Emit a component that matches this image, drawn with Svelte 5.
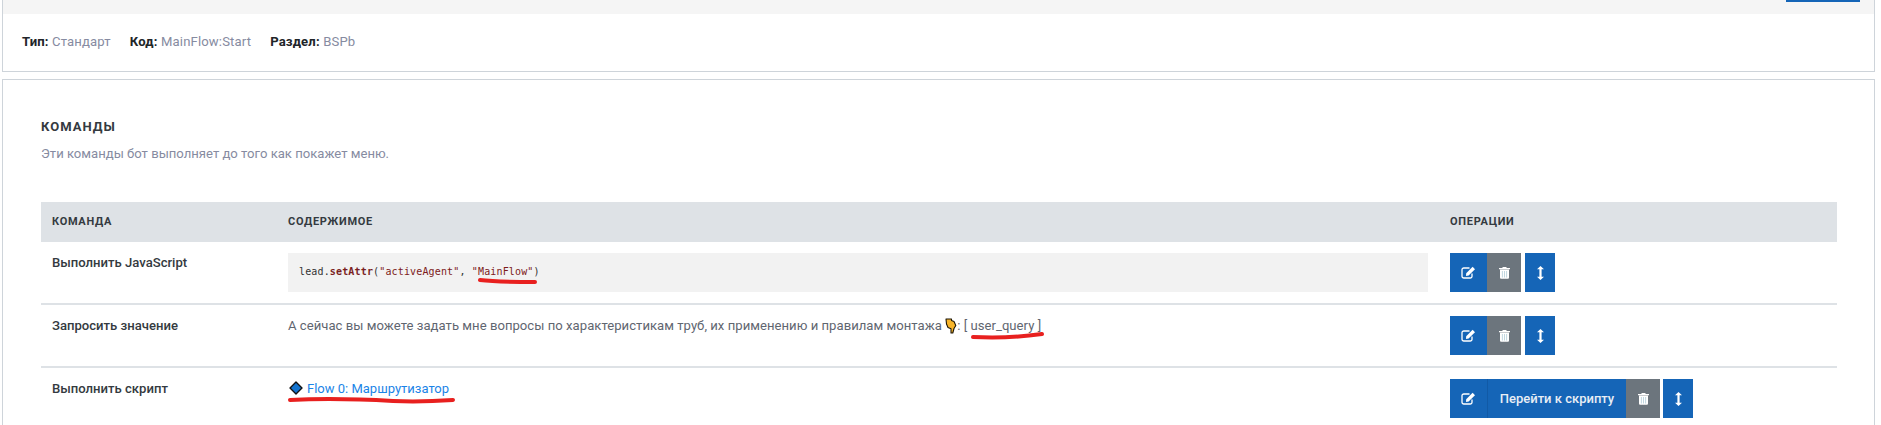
<script>
  const rows = [
    { name: 'Выполнить JavaScript', kind: 'code' },
    { name: 'Запросить значение', kind: 'query' },
    { name: 'Выполнить скрипт', kind: 'flow' }
  ];
</script>

{#snippet editIcon()}
  <svg class="ico" width="15" height="13" viewBox="0 0 15 13" aria-hidden="true">
    <path d="M11 7.5V10.2A1.8 1.8 0 0 1 9.2 12H2.8A1.8 1.8 0 0 1 1 10.2V3.8A1.8 1.8 0 0 1 2.8 2H8.5" fill="none" stroke="#fff" stroke-width="1.3"/>
    <path d="M5.2 7.2L11.6 0.8L14 3.2L7.6 9.6L5 10Z" fill="#fff"/>
  </svg>
{/snippet}

{#snippet trashIcon()}
  <svg class="ico" width="11" height="13" viewBox="0 0 11 13" aria-hidden="true">
    <path d="M3.5 2V1H7.5V2H11V3.2H0V2Z" fill="#fff"/>
    <path d="M1 3.6H10V11.5A1.2 1.2 0 0 1 8.8 12.8H2.2A1.2 1.2 0 0 1 1 11.5Z" fill="#fff"/>
    <path d="M3.4 5V11.5M5.5 5V11.5M7.6 5V11.5" stroke="#b9d3dc" stroke-width="0.9"/>
  </svg>
{/snippet}

{#snippet arrowsIcon()}
  <svg class="ico" width="7" height="14" viewBox="0 0 7 14" aria-hidden="true">
    <path d="M3.5 0L7 3.2H4.6V10.8H7L3.5 14L0 10.8H2.4V3.2H0Z" fill="#fff"/>
  </svg>
{/snippet}

<div class="page">
  <section class="card info">
    <div class="bar"><span class="bar-btn"></span></div>
    <div class="meta">
      <span><b>Тип:</b> Стандарт</span>
      <span><b>Код:</b> MainFlow:Start</span>
      <span><b>Раздел:</b> BSPb</span>
    </div>
  </section>

  <section class="card main">
    <h2>КОМАНДЫ</h2>
    <p class="sub">Эти команды бот выполняет до того как покажет меню.</p>

    <table>
      <colgroup>
        <col class="c1" /><col class="c2" /><col />
      </colgroup>
      <thead>
        <tr><th>КОМАНДА</th><th>СОДЕРЖИМОЕ</th><th>ОПЕРАЦИИ</th></tr>
      </thead>
      <tbody>
        {#each rows as row}
          <tr>
            <td class="name">{row.name}</td>
            <td>
              {#if row.kind === 'code'}
                <pre class="code">lead.<span class="fn">setAttr</span>(<span class="str">"activeAgent"</span>, <span class="str">"MainFlow"</span>)<svg class="mark m1" width="60" height="8" viewBox="0 0 60 8" aria-hidden="true"><path d="M2 3C18 5 34 5 57 5" /></svg></pre>
              {:else if row.kind === 'query'}
                <div class="text">А сейчас вы можете задать мне вопросы по характеристикам труб, их применению и правилам монтажа <svg class="hand" width="12" height="16" viewBox="0 0 12 16" aria-hidden="true"><path d="M1 1H6.5V2.5L9 3.5L10.8 7.5L9 10.5L7.8 15H6V10.8L3 9.5L1.5 6Z" fill="#f7b52c" stroke="#1c1505" stroke-width="1.1" stroke-linejoin="round"/></svg>: <span class="slot">[ user_query ]<svg class="mark m2" width="74" height="9" viewBox="0 0 74 9" aria-hidden="true"><path d="M2 6C22 7 50 6 71 3" /></svg></span></div>
              {:else}
                <a class="flow" href="#flow"><svg class="diamond" width="14" height="14" viewBox="0 0 14 14" aria-hidden="true"><path d="M7 1L13 7L7 13L1 7Z" fill="#1273cf" stroke="#111" stroke-width="1.4" stroke-linejoin="round"/></svg>Flow 0: Маршрутизатор<svg class="mark m3" width="168" height="9" viewBox="0 0 168 9" aria-hidden="true"><path d="M2 4C40 2 70 3 105 5C130 6 150 5 165 4" /></svg></a>
              {/if}
            </td>
            <td>
              <div class="ops">
                <div class="group">
                  <button class="btn edit" type="button">{@render editIcon()}</button>
                  {#if row.kind === 'flow'}
                    <button class="btn goto" type="button">Перейти к скрипту</button>
                  {/if}
                  <button class="btn del" type="button">{@render trashIcon()}</button>
                </div>
                <button class="btn move" class:wide={row.kind === 'flow'} type="button">{@render arrowsIcon()}</button>
              </div>
            </td>
          </tr>
        {/each}
      </tbody>
    </table>
  </section>
</div>

<style>
  :global(html), :global(body) {
    margin: 0;
    height: 425px;
    overflow: hidden;
    background: #fff;
  }
  .page {
    padding: 0 6px 0 2px;
    font-family: Roboto, "Liberation Sans", sans-serif;
    font-size: 13.1px;
    line-height: 20px;
    color: #868ba1;
  }
  .card {
    border: 1px solid #ced4da;
    background: #fff;
    box-sizing: border-box;
  }
  .info {
    border-top: 0;
    height: 72px;
    margin-bottom: 7px;
  }
  .bar {
    height: 14px;
    background: #f5f5f5;
    display: flex;
    justify-content: flex-end;
    padding-right: 14px;
  }
  .bar-btn {
    width: 74px;
    height: 2px;
    background: linear-gradient(90deg, #1565b7 49.5%, #115aa6 49.5%, #115aa6 50.5%, #1565b7 50.5%);
  }
  .meta {
    display: flex;
    gap: 19px;
    padding: 18px 19px 0;
    letter-spacing: 0.15px;
  }
  .meta b {
    color: #212529;
    font-weight: 700;
  }
  .main {
    height: 400px;
    padding: 37px 37px 0 38px;
  }
  h2 {
    margin: 0;
    font-size: 13px;
    line-height: 20px;
    font-weight: 700;
    letter-spacing: 1px;
    color: #343a40;
  }
  .sub {
    margin: 7px 0 0;
    line-height: 20px;
  }
  table {
    width: 100%;
    margin-top: 38px;
    border-collapse: collapse;
    table-layout: fixed;
  }
  .c1 { width: 236px; }
  .c2 { width: 1162px; }
  th {
    height: 40px;
    padding: 0 11px;
    background: #dee2e6;
    color: #343a40;
    text-align: left;
    font-size: 11px;
    font-weight: 700;
    letter-spacing: 0.7px;
  }
  td {
    padding: 11px;
    vertical-align: top;
    border-top: 2px solid #dee2e6;
    color: #5f6670;
  }
  tbody tr:first-child td { border-top: 0; }
  .name {
    color: #343a40;
    font-weight: 500;
  }
  .code {
    position: relative;
    margin: 0;
    height: 39px;
    box-sizing: border-box;
    padding: 10px 11px;
    background: #f2f2f2;
    font-family: "DejaVu Sans Mono", monospace;
    font-size: 10px;
    letter-spacing: 0.15px;
    line-height: 18px;
    color: #333;
  }
  .fn { color: #7a1f1f; font-weight: 700; }
  .str { color: #7d1a1a; }
  .text { min-height: 39px; letter-spacing: 0.03px; }
  .hand { vertical-align: -4px; }
  .slot {
    position: relative;
    color: #5f6670;
  }
  .flow {
    position: relative;
    display: inline-block;
    color: #1b84e7;
    text-decoration: none;
    font-size: 13px;
  }
  .diamond {
    vertical-align: -2px;
    margin: 0 4px 0 1px;
  }
  .mark {
    position: absolute;
    pointer-events: none;
  }
  .mark path {
    fill: none;
    stroke: #e8201f;
    stroke-width: 4;
    stroke-linecap: round;
  }
  .m1 { left: 190px; top: 24px; }
  .m2 { left: 7px; top: 13px; }
  .m3 { left: 0; top: 17px; }
  .ops {
    display: flex;
    align-items: flex-start;
    gap: 4px;
  }
  .group { display: flex; }
  .btn {
    height: 39px;
    border: 0;
    padding: 0;
    margin: 0;
    background: #1565b7;
    color: #fff;
    font-family: inherit;
    font-size: 13px;
    font-weight: 500;
    display: flex;
    align-items: center;
    justify-content: center;
  }
  .edit { width: 37px; }
  .del { width: 34px; background: #6c757d; }
  .move { width: 30px; }
  .goto {
    width: 139px;
    border-left: 1px solid #115aa6;
    box-sizing: border-box;
    color: #e8eef5;
  }
  .wide { margin-left: -1px; }
</style>
